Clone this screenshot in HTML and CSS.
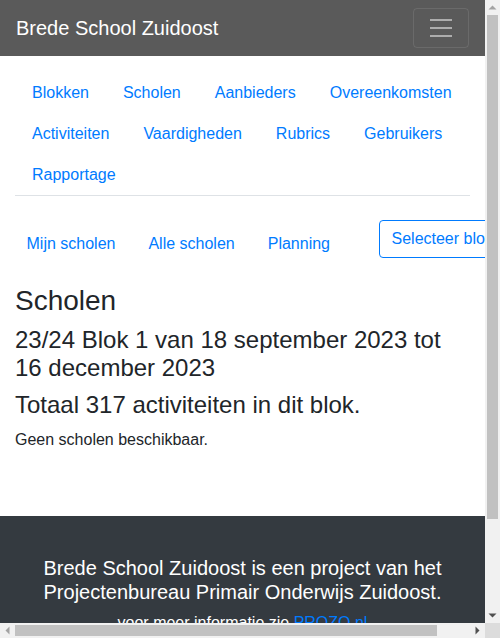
FILE: index.html
```html
<!DOCTYPE html>
<html lang="nl">
<head>
<meta charset="utf-8">
<title>Brede School Zuidoost</title>
<link rel="stylesheet" href="styles.css">
</head>
<body>
<div class="page">
  <nav class="topbar">
    <span class="brand">Brede School Zuidoost</span>
    <button class="toggler" type="button" aria-label="Menu">
      <svg width="30" height="30" viewBox="0 0 30 30"><path d="M4 7h22M4 15h22M4 23h22" stroke="rgba(255,255,255,0.5)" stroke-width="2" fill="none"/></svg>
    </button>
  </nav>
  <div class="container">
    <ul class="tabs">
      <li><a href="#">Blokken</a></li>
      <li><a href="#">Scholen</a></li>
      <li><a href="#">Aanbieders</a></li>
      <li><a href="#">Overeenkomsten</a></li>
      <li><a href="#">Activiteiten</a></li>
      <li><a href="#">Vaardigheden</a></li>
      <li><a href="#">Rubrics</a></li>
      <li><a href="#">Gebruikers</a></li>
      <li><a href="#">Rapportage</a></li>
    </ul>
  </div>
  <div class="subbar">
    <ul class="subnav">
      <li><a href="#">Mijn scholen</a></li>
      <li><a href="#">Alle scholen</a></li>
      <li><a href="#">Planning</a></li>
    </ul>
    <button class="select" type="button">Selecteer blok<span class="caret"></span></button>
  </div>
  <main class="container content">
    <h3>Scholen</h3>
    <h4>23/24 Blok 1 van 18 september 2023 tot 16 december 2023</h4>
    <h4>Totaal 317 activiteiten in dit blok.</h4>
    <p>Geen scholen beschikbaar.</p>
  </main>
  <footer class="footer">
    <h5>Brede School Zuidoost is een project van het Projectenbureau Primair Onderwijs Zuidoost.</h5>
    <p>voor meer informatie zie <a href="#">PROZO.nl</a></p>
  </footer>
</div>

<div class="vscroll" aria-hidden="true">
  <div class="sb-btn"><svg width="15" height="15" viewBox="0 0 15 15"><polygon points="3.5,9.5 11.5,9.5 7.5,5.5" fill="#a3a3a3"/></svg></div>
  <div class="vthumb"></div>
  <div class="sb-fill"></div>
  <div class="sb-btn"><svg width="15" height="15" viewBox="0 0 15 15"><polygon points="3.5,5.5 11.5,5.5 7.5,9.5" fill="#505050"/></svg></div>
</div>
<div class="hscroll" aria-hidden="true">
  <div class="sb-btn"><svg width="15" height="15" viewBox="0 0 15 15"><polygon points="9.5,3.5 9.5,11.5 5.5,7.5" fill="#a3a3a3"/></svg></div>
  <div class="hthumb"></div>
  <div class="sb-fill"></div>
  <div class="sb-btn"><svg width="15" height="15" viewBox="0 0 15 15"><polygon points="5.5,3.5 5.5,11.5 9.5,7.5" fill="#505050"/></svg></div>
</div>
<div class="sb-corner" aria-hidden="true"></div>
</body>
</html>
```
FILE: styles.css
```css
* { box-sizing: border-box; }
html { overflow: hidden; }
html, body { margin: 0; padding: 0; }
body {
  font-family: "Liberation Sans", Arial, sans-serif;
  font-size: 16px;
  line-height: 1.5;
  color: #212529;
  background: #fff;
}
a { color: #007bff; text-decoration: none; }

.page { width: 485px; }

.topbar {
  height: 56px;
  background: #5a5a5a;
  padding: 8px 16px;
  display: flex;
  align-items: center;
  justify-content: space-between;
}
.brand {
  color: #fff;
  font-size: 20px;
  line-height: 30px;
}
.toggler {
  width: 56px;
  height: 40px;
  padding: 4px 12px;
  background: transparent;
  border: 1px solid rgba(255,255,255,0.1);
  border-radius: 4px;
  display: flex;
  align-items: center;
  justify-content: center;
}
.toggler svg { display: block; }

.container { padding: 0 15px; }

.tabs {
  list-style: none;
  margin: 16px 0 0;
  padding: 0;
  display: flex;
  flex-wrap: wrap;
  border-bottom: 1px solid #dee2e6;
}
.tabs li { margin-bottom: -1px; }
.tabs a {
  display: block;
  padding: 8px 16px;
  border: 1px solid transparent;
  line-height: 24px;
}

.subbar {
  margin-top: 24px;
  padding-left: 10px;
  display: flex;
  align-items: flex-start;
  white-space: nowrap;
}
.subnav {
  list-style: none;
  margin: 4px 0 0;
  padding: 0;
  display: flex;
  flex-shrink: 0;
}
.subnav a {
  display: block;
  padding: 8px 16.5px;
  line-height: 24px;
}
.select {
  flex-shrink: 0;
  margin-left: 32px;
  height: 38px;
  padding: 6px 12px;
  font-family: inherit;
  font-size: 16px;
  line-height: 24px;
  color: #007bff;
  background: #fff;
  border: 1px solid #007bff;
  border-radius: 4px;
  white-space: nowrap;
}
.caret {
  display: inline-block;
  margin-left: 4px;
  vertical-align: 3px;
  border-top: 5px solid;
  border-left: 5px solid transparent;
  border-right: 5px solid transparent;
}

.content { padding-top: 20px; }
.content h3 {
  margin: 0 0 8px;
  font-size: 28px;
  font-weight: 500;
  line-height: 1.2;
}
.content h4 {
  margin: 0 0 8px;
  font-size: 24px;
  font-weight: 500;
  line-height: 1.2;
}
.content p { margin: 0; }

.footer {
  margin-top: 64px;
  background: #343a40;
  color: #fff;
  text-align: center;
  padding: 40px 15px 99px;
}
.footer h5 {
  margin: 0 0 7px;
  font-size: 20px;
  font-weight: 500;
  line-height: 1.2;
}
.footer p { margin: 0; }

/* faux browser scrollbars (overlay) */
.vscroll, .hscroll {
  position: fixed;
  background: #f1f1f1;
  display: flex;
}
.vscroll {
  top: 0;
  right: 0;
  width: 15px;
  height: 623px;
  flex-direction: column;
}
.hscroll {
  left: 0;
  bottom: 0;
  width: 485px;
  height: 15px;
  flex-direction: row;
}
.sb-btn {
  width: 15px;
  height: 15px;
  flex-shrink: 0;
}
.sb-btn svg { display: block; }
.sb-fill { flex: 1; }
.vthumb {
  height: 504px;
  margin: 0 2px;
  background: #c1c1c1;
  flex-shrink: 0;
}
.hthumb {
  width: 422px;
  margin: 2px 0;
  background: #c1c1c1;
  flex-shrink: 0;
}
.sb-corner {
  position: fixed;
  right: 0;
  bottom: 0;
  width: 15px;
  height: 15px;
  background: #dcdcdc;
}
```
